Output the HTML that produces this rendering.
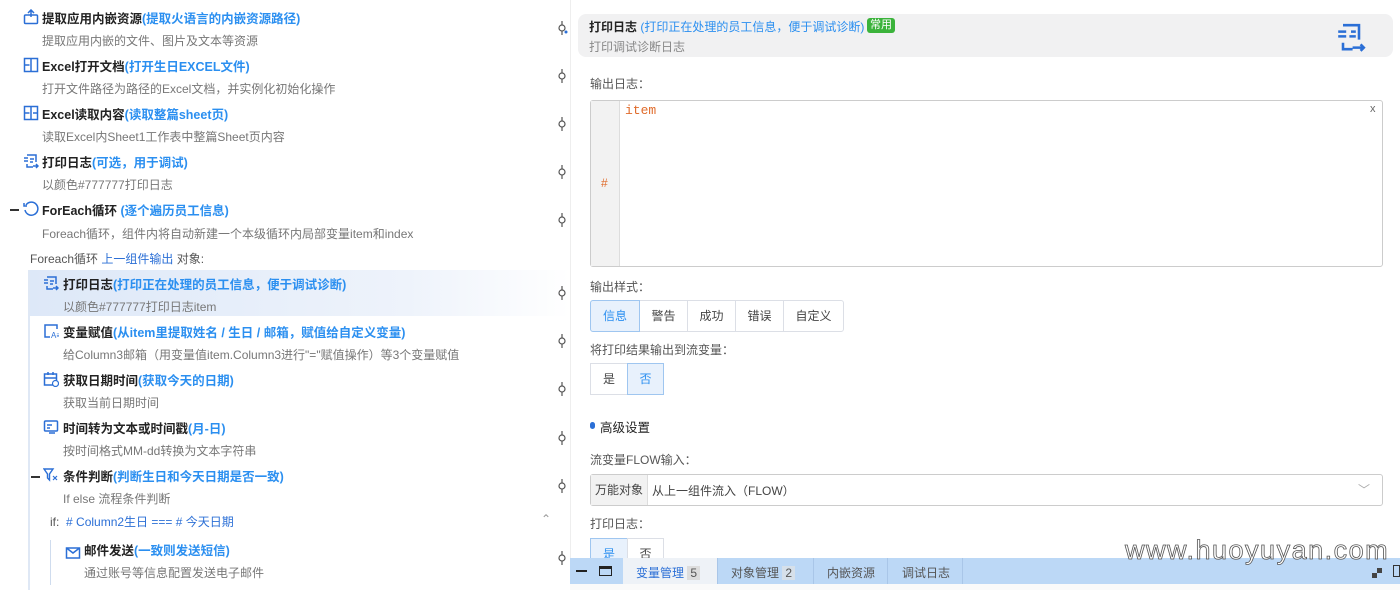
<!DOCTYPE html>
<html><head><meta charset="utf-8">
<style>
*{margin:0;padding:0;box-sizing:border-box}
body{width:1400px;height:590px;overflow:hidden;background:#fff;font-family:"Liberation Sans","Noto Sans CJK SC",sans-serif;font-size:12px;color:#333;position:relative}
.a{position:absolute;white-space:nowrap}
.t{font-size:12.5px;font-weight:bold;color:#222}
.t span{color:#2b8ff0}
.d{color:#777;font-size:12px}
.ic{position:absolute;width:16px;height:16px}
.cn{position:absolute;left:556px;width:12px;height:14px}
.lbl{color:#555;font-size:12px}
.btn{position:absolute;height:32px;border:1px solid #dcdfe6;background:#fff;text-align:center;line-height:30px;color:#444;font-size:12px}
.on{background:#e8f1fc;color:#2b8ff0;border-color:#9fc6f0}
</style></head><body>

<div class="a" style="left:30px;top:270px;width:540px;height:46px;background:linear-gradient(90deg,#dde8f8,#eef3fb 70%,#fff)"></div>
<div class="a" style="left:28px;top:270px;width:2px;height:320px;background:#dfe8f5"></div>
<div class="a" style="left:50px;top:540px;width:1px;height:45px;background:#cfdcee"></div>
<div class="a" style="left:570px;top:0;width:1px;height:558px;background:#eee"></div>

<svg class="ic" style="left:23px;top:9px" viewBox="0 0 16 16"><rect x="1.5" y="6" width="13" height="8.5" rx="1" fill="none" stroke="#2b6fd6" stroke-width="1.5"/><path d="M8 1v7M5 4l3-3 3 3" fill="none" stroke="#2b6fd6" stroke-width="1.5"/></svg>
<div class="a t" style="left:42px;top:8px">提取应用内嵌资源<span>(提取火语言的内嵌资源路径)</span></div>
<div class="a d" style="left:42px;top:32px">提取应用内嵌的文件、图片及文本等资源</div>

<svg class="ic" style="left:23px;top:57px" viewBox="0 0 16 16"><rect x="1.5" y="1.5" width="13" height="13" fill="none" stroke="#2b6fd6" stroke-width="1.5"/><path d="M8 1.5v13M1.5 8h5" stroke="#2b6fd6" stroke-width="1.5"/></svg>
<div class="a t" style="left:42px;top:56px">Excel打开文档<span>(打开生日EXCEL文件)</span></div>
<div class="a d" style="left:42px;top:80px">打开文件路径为路径的Excel文档，并实例化初始化操作</div>

<svg class="ic" style="left:23px;top:105px" viewBox="0 0 16 16"><rect x="1.5" y="1.5" width="13" height="13" fill="none" stroke="#2b6fd6" stroke-width="1.5"/><path d="M8 1.5v13M1.5 8h5M10 8h4" stroke="#2b6fd6" stroke-width="1.5"/></svg>
<div class="a t" style="left:42px;top:104px">Excel读取内容<span>(读取整篇sheet页)</span></div>
<div class="a d" style="left:42px;top:128px">读取Excel内Sheet1工作表中整篇Sheet页内容</div>

<svg class="ic" style="left:23px;top:153px" viewBox="0 0 16 16"><path d="M4 2h9v7M1 5h4M1 8h4M7 6h4M7 9h3M4 11v3h6M10 13h5M13 11l2 2-2 2" fill="none" stroke="#2b6fd6" stroke-width="1.5"/></svg>
<div class="a t" style="left:42px;top:152px">打印日志<span>(可选，用于调试)</span></div>
<div class="a d" style="left:42px;top:176px">以颜色#777777打印日志</div>

<div class="a" style="left:10px;top:209px;width:9px;height:1.5px;background:#333"></div>
<svg class="ic" style="left:23px;top:201px" viewBox="0 0 16 16"><path d="M3 4A6.5 6.5 0 1 1 2 9" fill="none" stroke="#2b6fd6" stroke-width="1.5"/><path d="M1 2v3h3" fill="none" stroke="#2b6fd6" stroke-width="1.5"/></svg>
<div class="a t" style="left:42px;top:200px">ForEach循环 <span>(逐个遍历员工信息)</span></div>
<div class="a d" style="left:42px;top:225px">Foreach循环，组件内将自动新建一个本级循环内局部变量item和index</div>
<div class="a" style="left:30px;top:250px;color:#555">Foreach循环 <span style="color:#2b6fd6">上一组件输出</span> 对象:</div>

<svg class="ic" style="left:43px;top:275px" viewBox="0 0 16 16"><path d="M4 2h9v7M1 5h4M1 8h4M7 6h4M7 9h3M4 11v3h6M10 13h5M13 11l2 2-2 2" fill="none" stroke="#2b6fd6" stroke-width="1.5"/></svg>
<div class="a t" style="left:63px;top:274px">打印日志<span>(打印正在处理的员工信息，便于调试诊断)</span></div>
<div class="a d" style="left:63px;top:298px">以颜色#777777打印日志item</div>

<svg class="ic" style="left:43px;top:323px" viewBox="0 0 16 16"><path d="M14 6V2H2v12h5" fill="none" stroke="#2b6fd6" stroke-width="1.5"/><text x="8" y="15" font-size="8" fill="#2b6fd6" font-family="Liberation Sans">A≡</text></svg>
<div class="a t" style="left:63px;top:322px">变量赋值<span>(从item里提取姓名 / 生日 / 邮箱，赋值给自定义变量)</span></div>
<div class="a d" style="left:63px;top:346px">给Column3邮箱（用变量值item.Column3进行"="赋值操作）等3个变量赋值</div>

<svg class="ic" style="left:43px;top:371px" viewBox="0 0 16 16"><rect x="1.5" y="3" width="12" height="11" fill="none" stroke="#2b6fd6" stroke-width="1.5"/><path d="M1.5 7h12M5 1v3M10 1v3" stroke="#2b6fd6" stroke-width="1.5"/><circle cx="12.5" cy="12.5" r="3" fill="#fff" stroke="#2b6fd6" stroke-width="1.2"/></svg>
<div class="a t" style="left:63px;top:370px">获取日期时间<span>(获取今天的日期)</span></div>
<div class="a d" style="left:63px;top:394px">获取当前日期时间</div>

<svg class="ic" style="left:43px;top:419px" viewBox="0 0 16 16"><rect x="1.5" y="2" width="13" height="10" rx="1" fill="none" stroke="#2b6fd6" stroke-width="1.5"/><path d="M4 6h5M4 9h3M6 14h6" stroke="#2b6fd6" stroke-width="1.5"/></svg>
<div class="a t" style="left:63px;top:418px">时间转为文本或时间戳<span>(月-日)</span></div>
<div class="a d" style="left:63px;top:442px">按时间格式MM-dd转换为文本字符串</div>

<div class="a" style="left:31px;top:476px;width:9px;height:1.5px;background:#333"></div>
<svg class="ic" style="left:43px;top:467px" viewBox="0 0 16 16"><path d="M1 2h9L6.5 7v6L4.5 11V7z" fill="none" stroke="#2b6fd6" stroke-width="1.4"/><path d="M10 9l4 4M14 9l-4 4" stroke="#2b6fd6" stroke-width="1.2"/></svg>
<div class="a t" style="left:63px;top:466px">条件判断<span>(判断生日和今天日期是否一致)</span></div>
<div class="a d" style="left:63px;top:490px">If else 流程条件判断</div>
<div class="a" style="left:50px;top:513px;color:#555">if: &nbsp;<span style="color:#2b6fd6"># Column2生日 === # 今天日期</span></div>
<div class="a" style="left:541px;top:512px;color:#999;font-size:12px">⌃</div>

<svg class="ic" style="left:65px;top:545px" viewBox="0 0 16 16"><rect x="1.5" y="3" width="13" height="10" fill="none" stroke="#2b6fd6" stroke-width="1.5"/><path d="M1.5 3l6.5 5 6.5-5" fill="none" stroke="#2b6fd6" stroke-width="1.5"/></svg>
<div class="a t" style="left:84px;top:540px">邮件发送<span>(一致则发送短信)</span></div>
<div class="a d" style="left:84px;top:564px">通过账号等信息配置发送电子邮件</div>

<svg width="0" height="0" style="position:absolute"><defs><g id="cn"><path d="M6 0v4M6 10v4" stroke="#555" stroke-width="1.2"/><circle cx="6" cy="7" r="3" fill="#fff" stroke="#555" stroke-width="1.2"/></g></defs></svg>
<svg class="cn" style="top:21px"><use href="#cn"/><circle cx="10" cy="11" r="1.5" fill="#2b6fd6"/></svg>
<svg class="cn" style="top:69px"><use href="#cn"/></svg>
<svg class="cn" style="top:117px"><use href="#cn"/></svg>
<svg class="cn" style="top:165px"><use href="#cn"/></svg>
<svg class="cn" style="top:213px"><use href="#cn"/></svg>
<svg class="cn" style="top:286px"><use href="#cn"/></svg>
<svg class="cn" style="top:334px"><use href="#cn"/></svg>
<svg class="cn" style="top:382px"><use href="#cn"/></svg>
<svg class="cn" style="top:431px"><use href="#cn"/></svg>
<svg class="cn" style="top:479px"><use href="#cn"/></svg>
<svg class="cn" style="top:551px"><use href="#cn"/></svg>

<div class="a" style="left:578px;top:14px;width:815px;height:43px;background:#f1f1f2;border-radius:8px"></div>
<div class="a" style="left:589px;top:18px;font-size:12px;font-weight:bold;color:#222">打印日志 <span style="color:#2b8ff0;font-weight:normal">(打印正在处理的员工信息，便于调试诊断)</span></div>
<div class="a" style="left:867px;top:18px;background:#3bb33b;color:#fff;font-size:11px;padding:0 3px;border-radius:3px;height:15px;line-height:15px">常用</div>
<div class="a" style="left:589px;top:38px;color:#888;font-size:12px">打印调试诊断日志</div>
<svg class="a" style="left:1335px;top:22px" width="32" height="32" viewBox="0 0 20 20"><path d="M5 2h10v9M2 6h5M2 9h5M10 6h3M9 9h4M5 13v4h6M11 16h7M16 14l2 2-2 2" fill="none" stroke="#2b6fd6" stroke-width="1.6"/></svg>

<div class="a lbl" style="left:590px;top:75px">输出日志：</div>
<div class="a" style="left:590px;top:100px;width:793px;height:167px;border:1px solid #ccc;border-radius:3px;background:#fff"></div>
<div class="a" style="left:591px;top:101px;width:29px;height:165px;background:#f2f2f2;border-right:1px solid #ddd"></div>
<div class="a" style="left:601px;top:176px;color:#e06c2c;font-size:12px">#</div>
<div class="a" style="left:625px;top:103px;color:#e06c2c;font-family:'Liberation Mono',monospace;font-size:13px">item</div>
<div class="a" style="left:1370px;top:103px;color:#666;font-size:11px">x</div>

<div class="a lbl" style="left:590px;top:278px">输出样式：</div>
<div class="btn" style="left:639px;top:300px;width:49px">警告</div>
<div class="btn" style="left:687px;top:300px;width:49px">成功</div>
<div class="btn" style="left:735px;top:300px;width:49px">错误</div>
<div class="btn" style="left:783px;top:300px;width:61px;border-radius:0 3px 3px 0">自定义</div>
<div class="btn on" style="left:590px;top:300px;width:50px;border-radius:3px 0 0 3px">信息</div>

<div class="a lbl" style="left:590px;top:341px">将打印结果输出到流变量：</div>
<div class="btn" style="left:590px;top:363px;width:38px">是</div>
<div class="btn on" style="left:627px;top:363px;width:37px">否</div>

<div class="a" style="left:590px;top:422px;width:5px;height:7px;border-radius:3px;background:#2b6fd6"></div>
<div class="a" style="left:600px;top:417px;font-size:12.5px;color:#222">高级设置</div>

<div class="a lbl" style="left:590px;top:451px">流变量FLOW输入：</div>
<div class="a" style="left:590px;top:474px;width:793px;height:32px;border:1px solid #ccc;border-radius:3px"></div>
<div class="a" style="left:591px;top:475px;width:57px;height:30px;background:#f2f2f2;border-right:1px solid #ddd;line-height:30px;text-align:center;color:#444">万能对象</div>
<div class="a" style="left:652px;top:482px;color:#444">从上一组件流入（FLOW）</div>
<div class="a" style="left:1358px;top:481px;color:#aaa;font-size:12px">﹀</div>

<div class="a lbl" style="left:590px;top:515px">打印日志：</div>
<div class="btn on" style="left:590px;top:538px;width:38px">是</div>
<div class="btn" style="left:627px;top:538px;width:37px">否</div>

<div class="a" style="left:570px;top:558px;width:830px;height:26px;background:#bcd8f6"></div>
<div class="a" style="left:570px;top:584px;width:830px;height:6px;background:#fafafa"></div>
<div class="a" style="left:576px;top:570px;width:11px;height:1.5px;background:#222"></div>
<div class="a" style="left:599px;top:566px;width:13px;height:10px;border:1.5px solid #222;border-top-width:3px"></div>
<div class="a" style="left:623px;top:558px;width:94px;height:26px;background:#eef2f7"></div>
<div class="a" style="left:636px;top:564px;color:#2b6fd6;font-size:12px">变量管理 <span style="background:#ddd;color:#555;padding:0 3px">5</span></div>
<div class="a" style="left:717px;top:558px;width:1px;height:26px;background:#a9c6e8"></div>
<div class="a" style="left:731px;top:564px;color:#555">对象管理 <span style="background:#d6e0ea;padding:0 3px">2</span></div>
<div class="a" style="left:813px;top:558px;width:1px;height:26px;background:#a9c6e8"></div>
<div class="a" style="left:827px;top:564px;color:#555">内嵌资源</div>
<div class="a" style="left:887px;top:558px;width:1px;height:26px;background:#a9c6e8"></div>
<div class="a" style="left:902px;top:564px;color:#555">调试日志</div>
<div class="a" style="left:962px;top:558px;width:1px;height:26px;background:#a9c6e8"></div>
<div class="a" style="left:1372px;top:565px;font-size:10px;color:#444">▞</div>
<div class="a" style="left:1393px;top:565px;width:7px;height:12px;border:1.5px solid #333"></div>

<div class="a" style="left:1125px;top:535px;font-size:27px;color:#fff;letter-spacing:1.5px;font-family:'Liberation Sans',sans-serif;-webkit-text-stroke:0.8px #555">www.huoyuyan.com</div>
</body></html>
